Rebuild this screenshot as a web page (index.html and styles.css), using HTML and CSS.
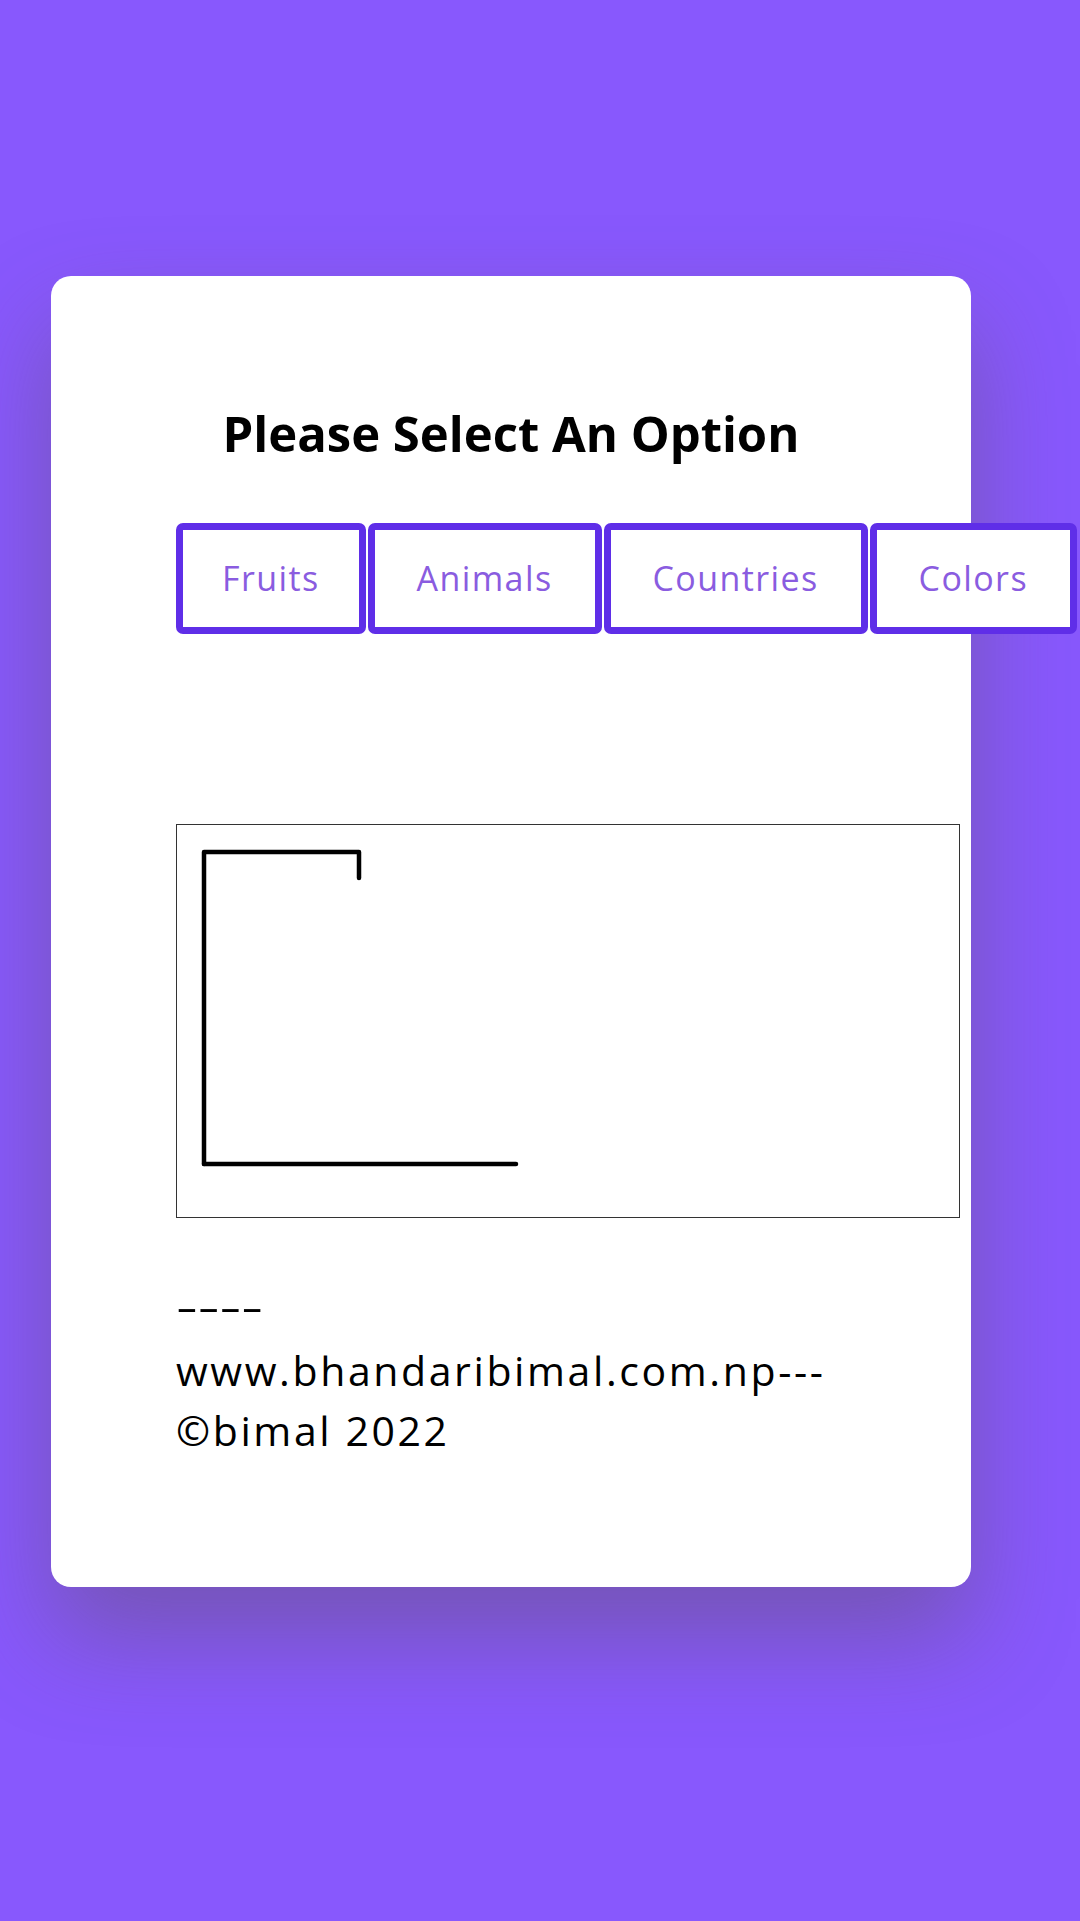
FILE: index.html
```html
<!DOCTYPE html>
<html lang="en">
<head>
<meta charset="utf-8">
<title>Hangman</title>
<link rel="stylesheet" href="styles.css">
</head>
<body>
<main class="card">
  <h1 class="title">Please Select An Option</h1>
  <div class="content">
    <div class="options">
      <button class="option">Fruits</button>
      <button class="option">Animals</button>
      <button class="option">Countries</button>
      <button class="option">Colors</button>
    </div>
    <div class="board">
      <svg class="gallows" width="782" height="392" viewBox="0 0 782 392">
        <path d="M27 339 V27 H182 V53" fill="none" stroke="#000" stroke-width="4.5" stroke-linecap="round" stroke-linejoin="round"/>
        <path d="M27 339 H339" fill="none" stroke="#000" stroke-width="4.5" stroke-linecap="round"/>
      </svg>
    </div>
    <p class="footer"><span class="line"><span class="dash">----</span></span><span class="line">www.bhandaribimal.com.np---</span><span class="line">©bimal 2022</span></p>
  </div>
</main>
</body>
</html>
```
FILE: styles.css
```css
html, body {
  margin: 0;
  padding: 0;
}
body {
  background: #8858fd;
  min-height: 1921px;
  font-family: "Open Sans", "Noto Sans", sans-serif;
  padding-top: 276px;
  box-sizing: border-box;
}
.card {
  display: block;
  margin-left: 51px;
  width: 920px;
  height: 1311px;
  box-sizing: border-box;
  background: #fff;
  border-radius: 20px;
  box-shadow: 0 50px 100px rgba(90, 80, 80, 0.42);
  padding-top: 122px;
}
.title {
  margin: 0;
  text-align: center;
  font-size: 49px;
  font-weight: 700;
  line-height: 70px;
  color: #000;
}
.content {
  margin-left: 125px;
}
.options {
  display: flex;
  gap: 2px;
  margin-top: 55px;
}
.option {
  flex-shrink: 0;
  font-family: "Open Sans", "Noto Sans", sans-serif;
  font-size: 34px;
  letter-spacing: 1.4px;
  line-height: 53px;
  color: #8a5ce0;
  background: #fff;
  border: 7px solid #5f2ee8;
  border-radius: 7px;
  padding: 22px 42px;
}
.option:first-child {
  padding: 22px 39px;
}
.board {
  margin-top: 190px;
  width: 784px;
  height: 394px;
  box-sizing: border-box;
  border: 1.5px solid #333;
}
.gallows {
  display: block;
}
.footer {
  margin: 62px 0 0 0;
  font-size: 41px;
  letter-spacing: 2.6px;
  line-height: 60px;
  color: #000;
}
.line {
  display: block;
}
.dash {
  display: inline-block;
  letter-spacing: 0;
  transform-origin: left center;
  transform: translateY(-5px) scaleX(1.65);
}
```
